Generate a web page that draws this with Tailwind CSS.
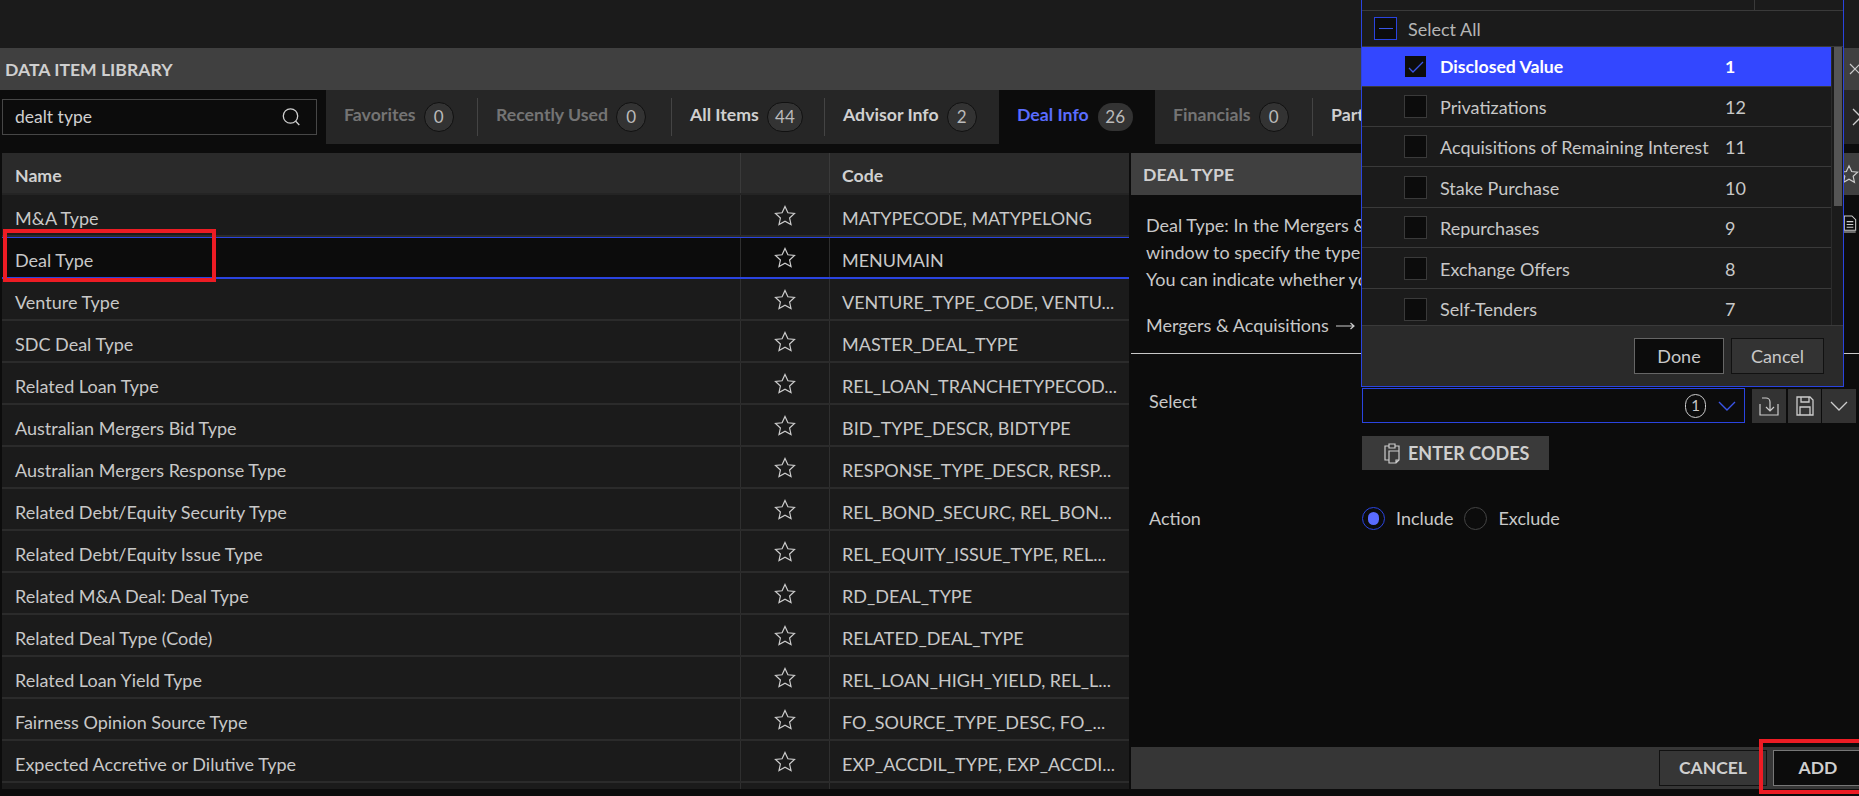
<!DOCTYPE html>
<html>
<head>
<meta charset="utf-8">
<script src="https://cdn.jsdelivr.net/npm/@tailwindcss/browser@4"></script>
</head>
<body class="bg-[#0c0c0c]">
<div class="relative w-[1859px] h-[796px] overflow-hidden bg-[#0c0c0c] text-[#c8c8c8] font-['Lato','Liberation_Sans',sans-serif] text-[18px]">
  <!-- top bar -->
  <div class="h-12 bg-[#1b1b1b]"></div>
  <!-- title -->
  <div class="h-[42px] bg-[#404040] flex items-center justify-between pl-[5px]">
    <span class="font-bold text-[17.6px] text-[#cfcfcf] pt-[2px]">DATA ITEM LIBRARY</span>
    <svg class="w-3 h-3 -mr-[2px]" viewBox="0 0 12 12" fill="none" stroke="#ccc" stroke-width="1.2"><path d="M1 1l10 10M11 1L1 11"/></svg>
  </div>
  <!-- search + tabs -->
  <div class="h-[54px] flex">
    <div class="w-[326px] shrink-0 pl-[2px] pt-[9px]">
      <div class="w-[315px] h-[36px] bg-[#0c0c0c] border border-[#474747] flex items-center justify-between pl-[12px] pr-[15px] text-[17.5px] text-[#d0d0d0]">
        <span>dealt type</span>
        <svg class="w-[20px] h-[20px]" viewBox="0 0 20 20" fill="none" stroke="#d0d0d0" stroke-width="1.3"><circle cx="9.5" cy="9" r="7.2"/><path d="M14.7 14.2l3.6 3.8"/></svg>
      </div>
    </div>
    <div class="flex-1 bg-[#262626] flex items-stretch text-[17.7px]">
      <div class="flex items-center pl-[18px] w-[151px]">
        <span class="font-bold text-[#747474] -mt-[3px]">Favorites</span>
        <span class="ml-[8px] w-[30px] h-[30px] rounded-full bg-[#333] border border-[#111] flex items-center justify-center text-[#bbb] text-[17px]">0</span>
      </div>
      <div class="w-[1px] h-[38px] mt-[8px] bg-[#444]"></div>
      <div class="flex items-center pl-[18px] w-[193px]">
        <span class="font-bold text-[#747474] -mt-[3px]">Recently Used</span>
        <span class="ml-[8px] w-[30px] h-[30px] rounded-full bg-[#333] border border-[#111] flex items-center justify-center text-[#bbb] text-[17px]">0</span>
      </div>
      <div class="w-[1px] h-[38px] mt-[8px] bg-[#444]"></div>
      <div class="flex items-center pl-[18px] w-[152px]">
        <span class="font-bold text-[#d0d0d0] -mt-[3px]">All Items</span>
        <span class="ml-[8px] w-[36px] h-[30px] rounded-full bg-[#333] border border-[#111] flex items-center justify-center text-[#bbb] text-[17px]">44</span>
      </div>
      <div class="w-[1px] h-[38px] mt-[8px] bg-[#444]"></div>
      <div class="flex items-center pl-[18px] w-[174px]">
        <span class="font-bold text-[#d0d0d0] -mt-[3px]">Advisor Info</span>
        <span class="ml-[8px] w-[30px] h-[30px] rounded-full bg-[#333] border border-[#111] flex items-center justify-center text-[#bbb] text-[17px]">2</span>
      </div>
      <div class="flex items-center pl-[18px] w-[156px] bg-[#0c0c0c]">
        <span class="font-bold text-[#5a6cff] -mt-[3px]">Deal Info</span>
        <span class="ml-[9px] w-[35px] h-[28px] rounded-full bg-[#333] flex items-center justify-center text-[#bbb] text-[17px]">26</span>
      </div>
      <div class="flex items-center pl-[18px] w-[157px]">
        <span class="font-bold text-[#747474] -mt-[3px]">Financials</span>
        <span class="ml-[8px] w-[30px] h-[30px] rounded-full bg-[#333] border border-[#111] flex items-center justify-center text-[#bbb] text-[17px]">0</span>
      </div>
      <div class="w-[1px] h-[38px] mt-[8px] bg-[#444]"></div>
      <div class="flex items-center pl-[18px] flex-1 justify-between overflow-hidden">
        <span class="font-bold text-[#d0d0d0] -mt-[3px]">Part</span>
        <svg class="w-[10px] h-[20px] -mr-[3px]" viewBox="0 0 10 20" fill="none" stroke="#ccc" stroke-width="1.3"><path d="M1 2l8 8-8 8"/></svg>
      </div>
    </div>
  </div>
  <!-- main -->
  <div class="mt-[9px] flex h-[636px]">
    <div class="ml-[2px] w-[1127px] shrink-0 overflow-hidden bg-[#1b1b1b]">
      <div class="grid grid-cols-[738px_89px_300px] h-[42px] bg-[#2a2a2a] border-b-2 border-[#242424] font-bold text-[17.7px] text-[#d0d0d0]">
        <div class="pl-[13px] pt-[6px] flex items-center">Name</div>
        <div class="border-l border-[#3a3a3a]"></div>
        <div class="border-l border-[#3a3a3a] pl-[12px] pt-[6px] flex items-center">Code</div>
      </div>
      <div class="grid grid-cols-[738px_89px_300px] h-[42px] border-b-2 border-[#2b2b2b]">
        <div class="pl-[13px] pt-[6px] flex items-center">M&amp;A Type</div>
        <div class="border-l border-[#2f2f2f] flex justify-center pt-[10px]"><svg class="w-[22px] h-[21px]" viewBox="0 0 22 21" fill="none" stroke="#ccc" stroke-width="1.2"><path d="M11 1.5l2.9 6.3 6.6.7-4.9 4.5 1.4 6.6-6-3.4-6 3.4 1.4-6.6-4.9-4.5 6.6-.7z"/></svg></div>
        <div class="border-l border-[#2f2f2f] pl-[12px] pt-[6px] flex items-center whitespace-nowrap">MATYPECODE, MATYPELONG</div>
      </div>
      <div class="grid grid-cols-[738px_89px_300px] h-[42px] bg-[#0c0c0c] border-t border-b-2 border-[#2a44e0]">
        <div class="pl-[13px] pt-[5px] flex items-center">Deal Type</div>
        <div class="border-l border-[#2f2f2f] flex justify-center pt-[9px]"><svg class="w-[22px] h-[21px]" viewBox="0 0 22 21" fill="none" stroke="#ccc" stroke-width="1.2"><path d="M11 1.5l2.9 6.3 6.6.7-4.9 4.5 1.4 6.6-6-3.4-6 3.4 1.4-6.6-4.9-4.5 6.6-.7z"/></svg></div>
        <div class="border-l border-[#2f2f2f] pl-[12px] pt-[5px] flex items-center whitespace-nowrap">MENUMAIN</div>
      </div>
      <div class="grid grid-cols-[738px_89px_300px] h-[42px] border-b-2 border-[#2b2b2b]">
        <div class="pl-[13px] pt-[6px] flex items-center">Venture Type</div>
        <div class="border-l border-[#2f2f2f] flex justify-center pt-[10px]"><svg class="w-[22px] h-[21px]" viewBox="0 0 22 21" fill="none" stroke="#ccc" stroke-width="1.2"><path d="M11 1.5l2.9 6.3 6.6.7-4.9 4.5 1.4 6.6-6-3.4-6 3.4 1.4-6.6-4.9-4.5 6.6-.7z"/></svg></div>
        <div class="border-l border-[#2f2f2f] pl-[12px] pt-[6px] flex items-center whitespace-nowrap">VENTURE_TYPE_CODE, VENTU...</div>
      </div>
      <div class="grid grid-cols-[738px_89px_300px] h-[42px] border-b-2 border-[#2b2b2b]">
        <div class="pl-[13px] pt-[6px] flex items-center">SDC Deal Type</div>
        <div class="border-l border-[#2f2f2f] flex justify-center pt-[10px]"><svg class="w-[22px] h-[21px]" viewBox="0 0 22 21" fill="none" stroke="#ccc" stroke-width="1.2"><path d="M11 1.5l2.9 6.3 6.6.7-4.9 4.5 1.4 6.6-6-3.4-6 3.4 1.4-6.6-4.9-4.5 6.6-.7z"/></svg></div>
        <div class="border-l border-[#2f2f2f] pl-[12px] pt-[6px] flex items-center whitespace-nowrap">MASTER_DEAL_TYPE</div>
      </div>
      <div class="grid grid-cols-[738px_89px_300px] h-[42px] border-b-2 border-[#2b2b2b]">
        <div class="pl-[13px] pt-[6px] flex items-center">Related Loan Type</div>
        <div class="border-l border-[#2f2f2f] flex justify-center pt-[10px]"><svg class="w-[22px] h-[21px]" viewBox="0 0 22 21" fill="none" stroke="#ccc" stroke-width="1.2"><path d="M11 1.5l2.9 6.3 6.6.7-4.9 4.5 1.4 6.6-6-3.4-6 3.4 1.4-6.6-4.9-4.5 6.6-.7z"/></svg></div>
        <div class="border-l border-[#2f2f2f] pl-[12px] pt-[6px] flex items-center whitespace-nowrap">REL_LOAN_TRANCHETYPECOD...</div>
      </div>
      <div class="grid grid-cols-[738px_89px_300px] h-[42px] border-b-2 border-[#2b2b2b]">
        <div class="pl-[13px] pt-[6px] flex items-center">Australian Mergers Bid Type</div>
        <div class="border-l border-[#2f2f2f] flex justify-center pt-[10px]"><svg class="w-[22px] h-[21px]" viewBox="0 0 22 21" fill="none" stroke="#ccc" stroke-width="1.2"><path d="M11 1.5l2.9 6.3 6.6.7-4.9 4.5 1.4 6.6-6-3.4-6 3.4 1.4-6.6-4.9-4.5 6.6-.7z"/></svg></div>
        <div class="border-l border-[#2f2f2f] pl-[12px] pt-[6px] flex items-center whitespace-nowrap">BID_TYPE_DESCR, BIDTYPE</div>
      </div>
      <div class="grid grid-cols-[738px_89px_300px] h-[42px] border-b-2 border-[#2b2b2b]">
        <div class="pl-[13px] pt-[6px] flex items-center">Australian Mergers Response Type</div>
        <div class="border-l border-[#2f2f2f] flex justify-center pt-[10px]"><svg class="w-[22px] h-[21px]" viewBox="0 0 22 21" fill="none" stroke="#ccc" stroke-width="1.2"><path d="M11 1.5l2.9 6.3 6.6.7-4.9 4.5 1.4 6.6-6-3.4-6 3.4 1.4-6.6-4.9-4.5 6.6-.7z"/></svg></div>
        <div class="border-l border-[#2f2f2f] pl-[12px] pt-[6px] flex items-center whitespace-nowrap">RESPONSE_TYPE_DESCR, RESP...</div>
      </div>
      <div class="grid grid-cols-[738px_89px_300px] h-[42px] border-b-2 border-[#2b2b2b]">
        <div class="pl-[13px] pt-[6px] flex items-center">Related Debt/Equity Security Type</div>
        <div class="border-l border-[#2f2f2f] flex justify-center pt-[10px]"><svg class="w-[22px] h-[21px]" viewBox="0 0 22 21" fill="none" stroke="#ccc" stroke-width="1.2"><path d="M11 1.5l2.9 6.3 6.6.7-4.9 4.5 1.4 6.6-6-3.4-6 3.4 1.4-6.6-4.9-4.5 6.6-.7z"/></svg></div>
        <div class="border-l border-[#2f2f2f] pl-[12px] pt-[6px] flex items-center whitespace-nowrap">REL_BOND_SECURC, REL_BON...</div>
      </div>
      <div class="grid grid-cols-[738px_89px_300px] h-[42px] border-b-2 border-[#2b2b2b]">
        <div class="pl-[13px] pt-[6px] flex items-center">Related Debt/Equity Issue Type</div>
        <div class="border-l border-[#2f2f2f] flex justify-center pt-[10px]"><svg class="w-[22px] h-[21px]" viewBox="0 0 22 21" fill="none" stroke="#ccc" stroke-width="1.2"><path d="M11 1.5l2.9 6.3 6.6.7-4.9 4.5 1.4 6.6-6-3.4-6 3.4 1.4-6.6-4.9-4.5 6.6-.7z"/></svg></div>
        <div class="border-l border-[#2f2f2f] pl-[12px] pt-[6px] flex items-center whitespace-nowrap">REL_EQUITY_ISSUE_TYPE, REL...</div>
      </div>
      <div class="grid grid-cols-[738px_89px_300px] h-[42px] border-b-2 border-[#2b2b2b]">
        <div class="pl-[13px] pt-[6px] flex items-center">Related M&amp;A Deal: Deal Type</div>
        <div class="border-l border-[#2f2f2f] flex justify-center pt-[10px]"><svg class="w-[22px] h-[21px]" viewBox="0 0 22 21" fill="none" stroke="#ccc" stroke-width="1.2"><path d="M11 1.5l2.9 6.3 6.6.7-4.9 4.5 1.4 6.6-6-3.4-6 3.4 1.4-6.6-4.9-4.5 6.6-.7z"/></svg></div>
        <div class="border-l border-[#2f2f2f] pl-[12px] pt-[6px] flex items-center whitespace-nowrap">RD_DEAL_TYPE</div>
      </div>
      <div class="grid grid-cols-[738px_89px_300px] h-[42px] border-b-2 border-[#2b2b2b]">
        <div class="pl-[13px] pt-[6px] flex items-center">Related Deal Type (Code)</div>
        <div class="border-l border-[#2f2f2f] flex justify-center pt-[10px]"><svg class="w-[22px] h-[21px]" viewBox="0 0 22 21" fill="none" stroke="#ccc" stroke-width="1.2"><path d="M11 1.5l2.9 6.3 6.6.7-4.9 4.5 1.4 6.6-6-3.4-6 3.4 1.4-6.6-4.9-4.5 6.6-.7z"/></svg></div>
        <div class="border-l border-[#2f2f2f] pl-[12px] pt-[6px] flex items-center whitespace-nowrap">RELATED_DEAL_TYPE</div>
      </div>
      <div class="grid grid-cols-[738px_89px_300px] h-[42px] border-b-2 border-[#2b2b2b]">
        <div class="pl-[13px] pt-[6px] flex items-center">Related Loan Yield Type</div>
        <div class="border-l border-[#2f2f2f] flex justify-center pt-[10px]"><svg class="w-[22px] h-[21px]" viewBox="0 0 22 21" fill="none" stroke="#ccc" stroke-width="1.2"><path d="M11 1.5l2.9 6.3 6.6.7-4.9 4.5 1.4 6.6-6-3.4-6 3.4 1.4-6.6-4.9-4.5 6.6-.7z"/></svg></div>
        <div class="border-l border-[#2f2f2f] pl-[12px] pt-[6px] flex items-center whitespace-nowrap">REL_LOAN_HIGH_YIELD, REL_L...</div>
      </div>
      <div class="grid grid-cols-[738px_89px_300px] h-[42px] border-b-2 border-[#2b2b2b]">
        <div class="pl-[13px] pt-[6px] flex items-center">Fairness Opinion Source Type</div>
        <div class="border-l border-[#2f2f2f] flex justify-center pt-[10px]"><svg class="w-[22px] h-[21px]" viewBox="0 0 22 21" fill="none" stroke="#ccc" stroke-width="1.2"><path d="M11 1.5l2.9 6.3 6.6.7-4.9 4.5 1.4 6.6-6-3.4-6 3.4 1.4-6.6-4.9-4.5 6.6-.7z"/></svg></div>
        <div class="border-l border-[#2f2f2f] pl-[12px] pt-[6px] flex items-center whitespace-nowrap">FO_SOURCE_TYPE_DESC, FO_...</div>
      </div>
      <div class="grid grid-cols-[738px_89px_300px] h-[42px] border-b-2 border-[#2b2b2b]">
        <div class="pl-[13px] pt-[6px] flex items-center">Expected Accretive or Dilutive Type</div>
        <div class="border-l border-[#2f2f2f] flex justify-center pt-[10px]"><svg class="w-[22px] h-[21px]" viewBox="0 0 22 21" fill="none" stroke="#ccc" stroke-width="1.2"><path d="M11 1.5l2.9 6.3 6.6.7-4.9 4.5 1.4 6.6-6-3.4-6 3.4 1.4-6.6-4.9-4.5 6.6-.7z"/></svg></div>
        <div class="border-l border-[#2f2f2f] pl-[12px] pt-[6px] flex items-center whitespace-nowrap">EXP_ACCDIL_TYPE, EXP_ACCDI...</div>
      </div>
      <div class="grid grid-cols-[738px_89px_300px] h-[42px]">
        <div></div>
        <div class="border-l border-[#2f2f2f]"></div>
        <div class="border-l border-[#2f2f2f]"></div>
      </div>
    </div>
    <!-- detail -->
    <div class="ml-[2px] flex-1 flex flex-col">
      <div class="h-[42px] bg-[#404040] flex items-center justify-between pl-[12px]">
        <span class="font-bold text-[17.6px] text-[#d0d0d0] pt-[2px]">DEAL TYPE</span>
        <svg class="w-[20px] h-[20px]" viewBox="0 0 22 21" fill="none" stroke="#ccc" stroke-width="1.3"><path d="M11 1.5l2.9 6.3 6.6.7-4.9 4.5 1.4 6.6-6-3.4-6 3.4 1.4-6.6-4.9-4.5 6.6-.7z"/></svg>
      </div>
      <div class="relative h-[159px] border-b border-[#c8c8c8] pl-[15px] pt-[17px] leading-[27px] whitespace-nowrap">
        <svg class="absolute right-[2px] top-[20px] w-[15px] h-[18px]" viewBox="0 0 15 19" fill="none" stroke="#ccc" stroke-width="1.1"><path d="M2 1h8l4 4v11H2zM4.5 7h7M4.5 10h7M4.5 13h7M1 18h13"/></svg>
        <p>Deal Type: In the Mergers &amp; Acq</p>
        <p>window to specify the type of</p>
        <p>You can indicate whether you</p>
        <p class="mt-[19px] flex items-center">Mergers &amp; Acquisitions
          <svg class="ml-[7px] w-[19px] h-[8px]" viewBox="0 0 19 8" fill="none" stroke="#ccc" stroke-width="1.2"><path d="M0 4h18M14.5 1l3.5 3-3.5 3"/></svg>
        </p>
      </div>
      <!-- form -->
      <div class="pl-[18px] pt-[34px] flex">
        <div class="w-[213px]">Select</div>
        <div class="flex flex-col">
          <div class="flex">
            <div class="w-[383px] h-[35px] border border-[#2a44e0] flex items-center justify-end pr-[8px]">
              <span class="w-[21px] h-[24px] rounded-full border border-[#ccc] flex items-center justify-center text-[15px] mr-[12px]">1</span>
              <svg class="w-[18px] h-[10px]" viewBox="0 0 18 10" fill="none" stroke="#3a55e8" stroke-width="1.4"><path d="M1 1l8 8 8-8" /></svg>
            </div>
            <div class="ml-[7px] w-[34px] h-[34px] mt-[1px] bg-[#333] flex items-center justify-center">
              <svg class="w-[20px] h-[20px]" viewBox="0 0 20 20" fill="none" stroke="#ccc" stroke-width="1.2"><path d="M1 8v11h18V8M3 2h4a4 4 0 0 1 4 4v9M7 11l4 4 4-4"/></svg>
            </div>
            <div class="ml-[2px] w-[33px] h-[34px] mt-[1px] bg-[#333] flex items-center justify-center">
              <svg class="w-[18px] h-[20px]" viewBox="0 0 18 20" fill="none" stroke="#ccc" stroke-width="1.3"><path d="M1 1h13l3 3v15H1zM5 1v5h8V1M4 19v-8h10v8"/></svg>
            </div>
            <div class="ml-[1px] w-[34px] h-[34px] mt-[1px] bg-[#333] flex items-center justify-center">
              <svg class="w-[18px] h-[10px]" viewBox="0 0 18 10" fill="none" stroke="#ccc" stroke-width="1.3"><path d="M1 1l8 8 8-8"/></svg>
            </div>
          </div>
          <div class="mt-[13px] w-[187px] h-[34px] bg-[#3a3a3a] flex items-center pl-[21px] font-bold text-[18px] text-[#cfcfcf] whitespace-nowrap">
            <svg class="w-[18px] h-[23px] mr-[7px] shrink-0" viewBox="0 0 18 23" fill="none" stroke="#ccc" stroke-width="1.2"><path d="M6 4H2v14h4M12 4h4v6M6 2h6v4H6zM6 9h10v9l-3 3H6zM13 21v-3h3"/></svg>
            ENTER CODES
          </div>
        </div>
      </div>
      <div class="pl-[18px] mt-[36px] flex items-center h-[24px]">
        <div class="w-[213px]">Action</div>
        <span class="w-[23px] h-[23px] rounded-full border border-[#2a44e0] flex items-center justify-center"><span class="w-[11px] h-[13px] rounded-full bg-[#5a6cff]"></span></span>
        <span class="ml-[11px]">Include</span>
        <span class="ml-[11px] w-[23px] h-[23px] rounded-full border border-[#444]"></span>
        <span class="ml-[11px]">Exclude</span>
      </div>
      <div class="mt-auto h-[42px] bg-[#363636] flex items-center justify-end gap-[6px] font-bold text-[17.5px]">
        <div class="w-[108px] h-[36px] border border-[#111] flex items-center justify-center text-[#cfcfcf]">CANCEL</div>
        <div class="w-[90px] h-[36px] bg-[#0c0c0c] border border-[#777] flex items-center justify-center text-[#cfcfcf] -mr-[4px]">ADD</div>
      </div>
    </div>
  </div>

  <!-- dropdown overlay -->
  <div class="absolute left-[1361px] top-0 w-[483px] h-[387px] bg-[#1b1b1b] border-x border-b border-[#2a44e0] flex flex-col">
    <div class="h-[11px] border-b border-[#3a3a3a] flex justify-end pr-[88px]"><div class="w-[1px] bg-[#3a3a3a]"></div></div>
    <div class="h-[36px] border-b border-[#3a3a3a] flex items-center pl-[12px]">
      <span class="w-[23px] h-[23px] bg-[#0c0c0c] border border-[#2a44e0] flex items-center justify-center"><span class="w-[14px] h-[1px] bg-[#3a55e8]"></span></span>
      <span class="ml-[11px] text-[#b5b5b5] pt-[2px]">Select All</span>
    </div>
    <div class="flex h-[278px]">
      <div class="w-[469px] overflow-hidden whitespace-nowrap">
        <div class="h-[40px] bg-[#3347ff] flex items-center pl-[43px] font-bold text-[17.7px] text-white border-b border-[#3a3a3a]">
          <span class="w-[21px] h-[21px] bg-[#0c0c0c] flex items-center justify-center"><svg class="w-[16px] h-[12px]" viewBox="0 0 16 12" fill="none" stroke="#3a55e8" stroke-width="1.3"><path d="M1 7l4 4L15 1"/></svg></span>
          <span class="ml-[14px] w-[285px] pt-[2px]">Disclosed Value</span><span class="pt-[2px]">1</span>
        </div>
        <div class="h-[40px] flex items-center pl-[42px] border-b border-[#3a3a3a]">
          <span class="w-[23px] h-[23px] bg-[#0c0c0c] border border-[#3a3a3a]"></span>
          <span class="ml-[13px] w-[285px] pt-[2px]">Privatizations</span><span class="pt-[2px]">12</span>
        </div>
        <div class="h-[40px] flex items-center pl-[42px] border-b border-[#3a3a3a]">
          <span class="w-[23px] h-[23px] bg-[#0c0c0c] border border-[#3a3a3a]"></span>
          <span class="ml-[13px] w-[285px] pt-[2px]">Acquisitions of Remaining Interest</span><span class="pt-[2px]">11</span>
        </div>
        <div class="h-[41px] flex items-center pl-[42px] border-b border-[#3a3a3a]">
          <span class="w-[23px] h-[23px] bg-[#0c0c0c] border border-[#3a3a3a]"></span>
          <span class="ml-[13px] w-[285px] pt-[2px]">Stake Purchase</span><span class="pt-[2px]">10</span>
        </div>
        <div class="h-[40px] flex items-center pl-[42px] border-b border-[#3a3a3a]">
          <span class="w-[23px] h-[23px] bg-[#0c0c0c] border border-[#3a3a3a]"></span>
          <span class="ml-[13px] w-[285px] pt-[2px]">Repurchases</span><span class="pt-[2px]">9</span>
        </div>
        <div class="h-[41px] flex items-center pl-[42px] border-b border-[#3a3a3a]">
          <span class="w-[23px] h-[23px] bg-[#0c0c0c] border border-[#3a3a3a]"></span>
          <span class="ml-[13px] w-[285px] pt-[2px]">Exchange Offers</span><span class="pt-[2px]">8</span>
        </div>
        <div class="h-[40px] flex items-center pl-[42px]">
          <span class="w-[23px] h-[23px] bg-[#0c0c0c] border border-[#3a3a3a]"></span>
          <span class="ml-[13px] w-[285px]">Self-Tenders</span><span>7</span>
        </div>
      </div>
      <div class="flex-1 border-l border-[#2b2b2b] pl-[2px] pr-[1px]">
        <div class="h-[159px] bg-[#555]"></div>
      </div>
    </div>
    <div class="flex-1 bg-[#2a2a2a] border-t border-[#3a3a3a] flex items-start justify-end gap-[7px] pr-[19px] pt-[12px]">
      <div class="w-[90px] h-[36px] bg-[#0c0c0c] border border-[#666] flex items-center justify-center">Done</div>
      <div class="w-[93px] h-[36px] bg-[#333] border border-[#111] flex items-center justify-center">Cancel</div>
    </div>
  </div>

  <!-- annotation rectangles -->
  <div class="absolute left-[3px] top-[229px] w-[213px] h-[53px] border-4 border-[#ed1c24]"></div>
  <div class="absolute left-[1759px] top-[739px] w-[110px] h-[55px] border-4 border-[#ed1c24]"></div>
</div>
</body>
</html>
